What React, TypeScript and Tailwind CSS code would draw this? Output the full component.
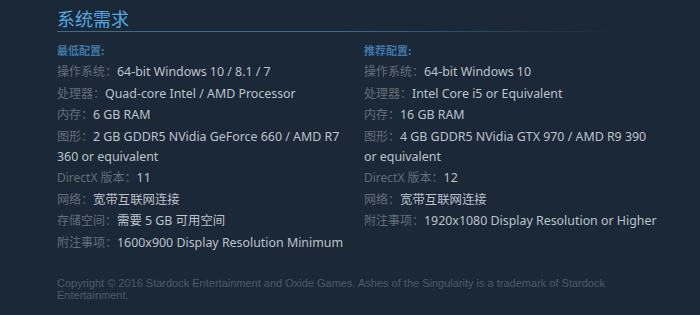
import React from "react";

type Row = { label: string; value: string };

const minRows: Row[] = [
  { label: "操作系统：", value: "64-bit Windows 10 / 8.1 / 7" },
  { label: "处理器：", value: "Quad-core Intel / AMD Processor" },
  { label: "内存：", value: "6 GB RAM" },
  { label: "图形：", value: "2 GB GDDR5 NVidia GeForce 660 / AMD R7 360 or equivalent" },
  { label: "DirectX 版本：", value: "11" },
  { label: "网络：", value: "宽带互联网连接" },
  { label: "存储空间：", value: "需要 5 GB 可用空间" },
  { label: "附注事项：", value: "1600x900 Display Resolution Minimum" },
];

const recRows: Row[] = [
  { label: "操作系统：", value: "64-bit Windows 10" },
  { label: "处理器：", value: "Intel Core i5 or Equivalent" },
  { label: "内存：", value: "16 GB RAM" },
  { label: "图形：", value: "4 GB GDDR5 NVidia GTX 970 / AMD R9 390 or equivalent" },
  { label: "DirectX 版本：", value: "12" },
  { label: "网络：", value: "宽带互联网连接" },
  { label: "附注事项：", value: "1920x1080 Display Resolution or Higher" },
];

function Column({ title, rows, className }: { title: string; rows: Row[]; className: string }) {
  return (
    <div className={className}>
      <div className="text-[11px] leading-[14px] font-bold text-[#3f78a6] font-['Noto_Sans_CJK_SC',serif] mb-[5px]">
        {title}
      </div>
      <ul className="flex flex-col gap-[1.5px]">
        {rows.map((r, i) => (
          <li key={i} className="text-[12.4px] leading-[20px]">
            <span className="text-[#646e78] text-[12px]">{r.label}</span>
            <span className="text-[#bcc3ca]">{r.value}</span>
          </li>
        ))}
      </ul>
    </div>
  );
}

export default function App() {
  return (
    <div className="w-[700px] h-[315px] bg-[#1b2838] overflow-hidden font-['Noto_Sans','Noto_Sans_CJK_SC',sans-serif]">
      <div className="pl-[57px] pt-[7px]">
        <div className="text-[18px] leading-[23px] text-[#52a8e2] font-['Noto_Sans_CJK_SC',sans-serif]">系统需求</div>
        <div className="h-[1px] w-[560px] mt-[1px] bg-gradient-to-r from-[#3a6d8f] via-[#3a6d8f] to-transparent" />
        <div className="flex mt-[11px]">
          <Column title="最低配置:" rows={minRows} className="w-[295px] mr-[12px]" />
          <Column title="推荐配置:" rows={recRows} className="w-[296px]" />
        </div>
        <div className="mt-[24px] w-[560px] text-[11px] leading-[12px] text-[#4f5b68] font-['Liberation_Sans',Arial,sans-serif]">
          Copyright © 2016 Stardock Entertainment and Oxide Games. Ashes of the Singularity is a trademark of Stardock Entertainment.
        </div>
      </div>
    </div>
  );
}
